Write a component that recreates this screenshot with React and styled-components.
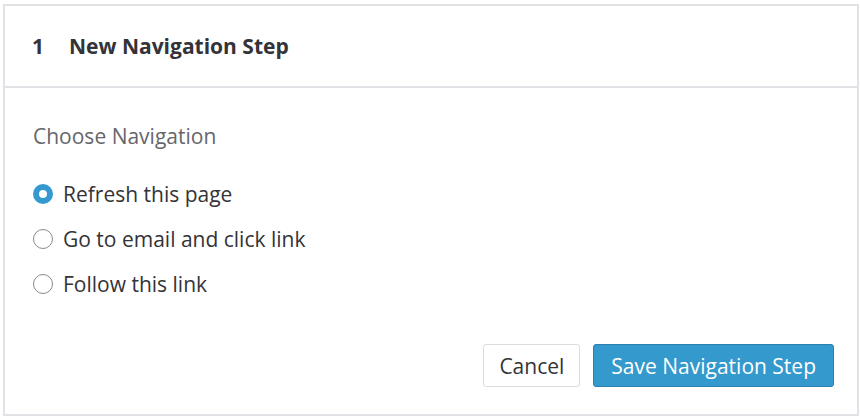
import React, { useState } from 'react';
import styled, { createGlobalStyle } from 'styled-components';

const GlobalStyle = createGlobalStyle`
  html, body {
    margin: 0;
    padding: 0;
    background: #ffffff;
  }
  body {
    font-family: "Open Sans", "Noto Sans", sans-serif;
    color: #333338;
  }
`;

const Page = styled.div`
  width: 860px;
  height: 420px;
  padding: 4px 2px 0 3px;
  box-sizing: border-box;
`;

const Card = styled.div`
  width: 856px;
  height: 412px;
  box-sizing: border-box;
  border: 2px solid #e2e2e6;
  background: #fff;
  display: flex;
  flex-direction: column;
`;

const Header = styled.div`
  height: 82px;
  flex-shrink: 0;
  box-sizing: border-box;
  border-bottom: 2px solid #e2e2e6;
  display: flex;
  align-items: center;
  padding-left: 27px;
  font-size: 21px;
  font-weight: 700;
  color: #333338;
`;

const StepNumber = styled.span`
  width: 37px;
`;

const Body = styled.div`
  flex: 1;
  display: flex;
  flex-direction: column;
  padding: 34px 23px 27px 28px;
`;

const Label = styled.div`
  font-size: 21px;
  line-height: 28px;
  color: #66666b;
  margin-bottom: 30px;
`;

const Options = styled.div`
  display: flex;
  flex-direction: column;
  gap: 17px;
`;

const Option = styled.label`
  display: flex;
  align-items: center;
  gap: 10px;
  font-size: 21px;
  line-height: 28px;
  color: #333338;
  height: 28px;
  cursor: pointer;
`;

const Radio = styled.span`
  width: 20px;
  height: 20px;
  flex-shrink: 0;
  box-sizing: border-box;
  border-radius: 50%;
  border: ${(p) => (p.checked ? '6px solid #3499d0' : '1.5px solid #8a8a8e')};
  background: #fff;
`;

const Footer = styled.div`
  margin-top: auto;
  display: flex;
  justify-content: flex-end;
  gap: 13px;
`;

const Button = styled.button`
  height: 43px;
  box-sizing: border-box;
  padding: 0 ${(p) => (p.primary ? '17px' : '15px')};
  font-family: "Open Sans", "Noto Sans", sans-serif;
  font-size: 21px;
  border-radius: 3px;
  cursor: pointer;
  border: 1px solid ${(p) => (p.primary ? '#2b7fae' : '#dcdce0')};
  background: ${(p) => (p.primary ? '#3499cc' : '#fff')};
  color: ${(p) => (p.primary ? '#fff' : '#333338')};
`;

const options = ['Refresh this page', 'Go to email and click link', 'Follow this link'];

const App = () => {
  const [selected, setSelected] = useState(0);

  return (
    <Page>
      <GlobalStyle />
      <Card>
        <Header>
          <StepNumber>1</StepNumber>
          New Navigation Step
        </Header>
        <Body>
          <Label>Choose Navigation</Label>
          <Options>
            {options.map((text, i) => (
              <Option key={text} onClick={() => setSelected(i)}>
                <Radio checked={selected === i} />
                {text}
              </Option>
            ))}
          </Options>
          <Footer>
            <Button>Cancel</Button>
            <Button primary>Save Navigation Step</Button>
          </Footer>
        </Body>
      </Card>
    </Page>
  );
};

export default App;
